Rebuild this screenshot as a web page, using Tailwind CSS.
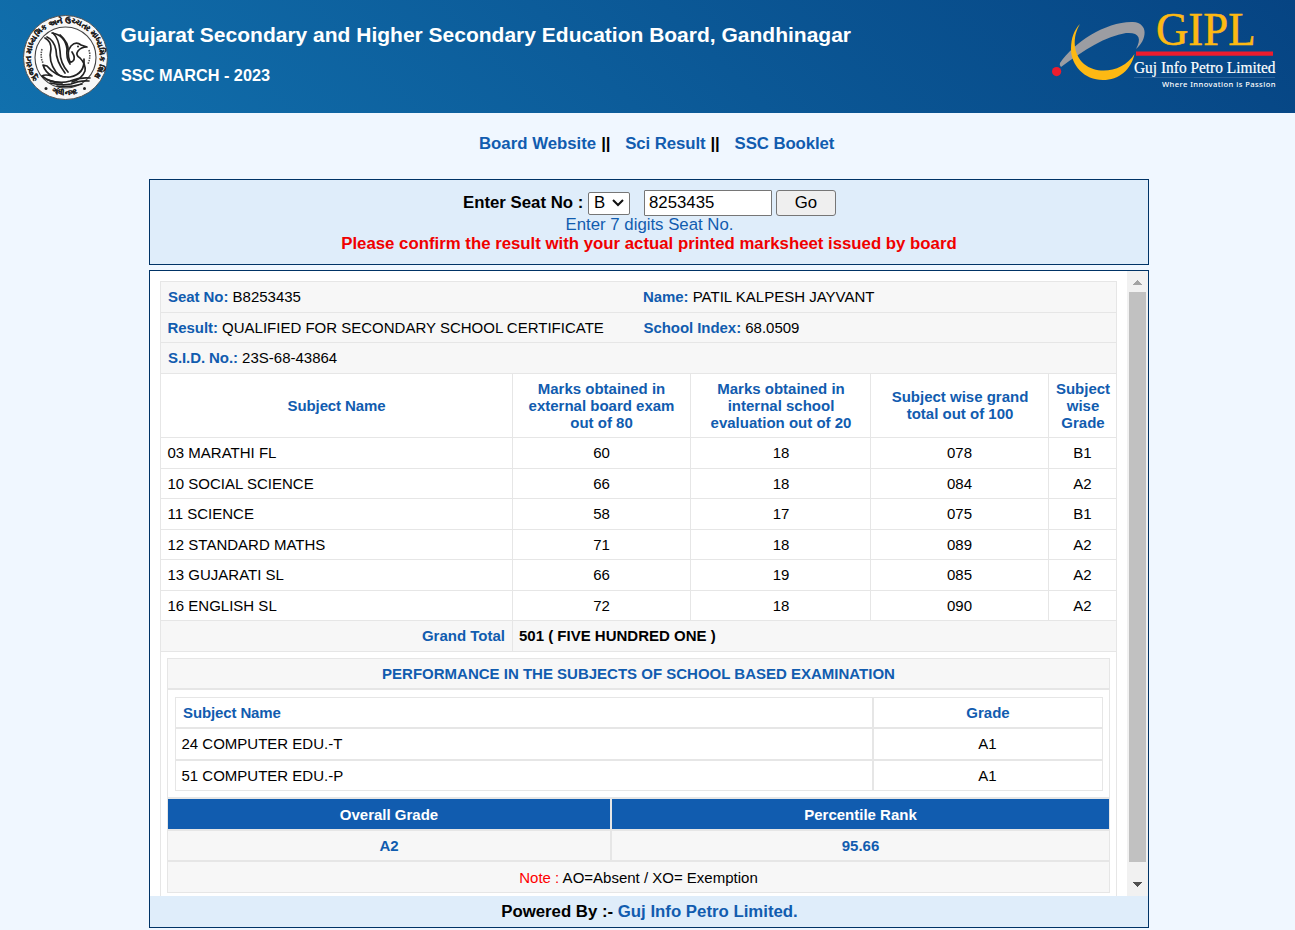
<!DOCTYPE html>
<html lang="en">
<head>
<meta charset="utf-8">
<title>SSC March 2023 Result</title>
<script src="https://cdn.jsdelivr.net/npm/@tailwindcss/browser@4"></script>
</head>
<body class="h-[930px] overflow-hidden bg-[#f0f7ff] font-['Liberation_Sans',Arial,sans-serif] text-[16.8px] leading-[19px] text-black">

<header class="flex h-[113px] justify-between bg-linear-[45deg,#1170ad_0%,#064483_100%] text-white">
  <div class="flex">
    <svg class="mt-[15px] ml-[23px] h-[85px] w-[85px] overflow-visible" viewBox="0 0 85 85" fill="none">
      <defs>
        <path id="ringTop" d="M15.500 64A34.500 34.500 0 1 1 69.500 64"/>
        <path id="ringBottom" d="M20 72.500A37.700 37.700 0 0 0 65 72.500"/>
      </defs>
      <circle cx="42.5" cy="42.5" r="42" fill="#f8f8f8" stroke="#555" stroke-width="1"/>
      <circle cx="42.5" cy="42.5" r="30.5" fill="#fff" stroke="#444" stroke-width="1.1"/>
      <g fill="#222" stroke="#222" stroke-width=".35" font-family="Noto Sans, sans-serif" font-size="7.6" font-weight="bold">
        <text><textPath href="#ringTop">ગુજરાત માધ્યમિક અને ઉચ્ચતર માધ્યમિક શિક્ષણ</textPath></text>
        <text font-size="7"><textPath href="#ringBottom" startOffset="10">ગાંધીનગર</textPath></text>
      </g>
      <g fill="#222"><circle cx="23" cy="73.5" r="1.5"/><circle cx="61.5" cy="73.5" r="1.5"/></g>
      <g stroke="#555" stroke-width="1.6" stroke-dasharray="1.5 1"><path d="M19 34Q17 42 20 48M66 35Q68 42 65 49"/></g>
      <g stroke="#222" stroke-width="1.7" stroke-linecap="round" stroke-linejoin="round">
        <path d="M22 23Q28 26 28 34Q25 46 33 57Q37 62 42 62"/>
        <path d="M24 22Q31 25 33 35Q33 46 42 58"/>
        <path d="M30 18Q36 24 37 36Q37 48 45 57"/>
        <path d="M29 18Q42 20 44 34Q43 43 47 49"/>
        <path d="M37 20Q46 28 45 36"/>
        <path d="M47 47Q43 37 48 31Q53 26 58 30L64 32Q58 32 55 36Q52 40 57 43Q63 49 62 56Q59 64 49 67"/>
        <path d="M49 37Q53 43 50 46Q48 48 46 46"/>
        <path d="M61 44Q62 59 47 62Q34 63 24 51L20 50Q22 57 29 61Q22 59 19 61Q27 68 39 68"/>
        <path d="M25 65Q38 69 47 66Q57 62 67 63"/>
        <path d="M27 68Q39 71 48 69Q58 65 66 66"/>
        <path d="M34 71Q45 73 59 69"/>
      </g>
      <circle cx="55" cy="31.5" r="1" fill="#222"/>
    </svg>
    <div class="ml-[12.500px] pt-[23px] font-bold">
      <h1 class="text-[21px] leading-[24px]">Gujarat Secondary and Higher Secondary Education Board, Gandhinagar</h1>
      <h2 class="mt-[19px] ml-[0.5px] text-[16.25px] leading-[19px]">SSC MARCH - 2023</h2>
    </div>
  </div>
  <svg class="mr-[15px] h-[100px] w-[240px] shrink-0 overflow-visible" viewBox="1040 0 240 100">
    <path d="M1060 63C1074 42 1107 21 1133 22C1149 23 1147 40 1136 49C1142 38 1139 32 1126 33C1106 36 1084 50 1061 67Q1059 65 1060 63Z" fill="#9c9da2"/>
    <path d="M1080 24C1072 37 1073 54 1084 64C1099 76 1124 71 1134.500 54C1131 70 1119 80 1103 80C1084 80 1071 65 1071 49C1071 38 1074 30 1080 24Z" fill="#fdb913"/>
    <circle cx="1056.600" cy="71.600" r="4.600" fill="#ed1c2e"/>
    <path d="M1136 51.500h137v4.200h-137z" fill="#ed1c2e"/>
    <path d="M1134 77.500h141" stroke="#3b70a5" stroke-width=".7"/>
    <text x="1156" y="45" fill="#fdb913" stroke="#fdb913" stroke-width=".5" font-family="Liberation Serif, serif" font-size="46" textLength="99.500" lengthAdjust="spacingAndGlyphs">GIPL</text>
    <text x="1134" y="73" fill="#fff" stroke="#fff" stroke-width=".2" font-family="Liberation Serif, serif" font-size="17" textLength="141.5" lengthAdjust="spacingAndGlyphs">Guj Info Petro Limited</text>
    <text x="1162" y="87" fill="#fff" font-family="Noto Sans, sans-serif" font-size="7.600" font-weight="500" textLength="113.5">Where Innovation is Passion</text>
  </svg>
</header>

<nav class="flex pt-[21px] pl-[479px] font-bold whitespace-pre"><a class="text-[#115caf]">Board Website</a><span class="mr-[15px] ml-[5px] tracking-[-0.2px]">||</span><a class="tracking-[-0.08px] text-[#115caf]">Sci Result</a><span class="mr-[15px] ml-[5px] tracking-[-0.2px]">||</span><a class="tracking-[-0.08px] text-[#115caf]">SSC Booklet</a></nav>

<main class="ml-[149px] w-[1000px]">
  <form class="mt-[26px] h-[86px] border border-[#003366] bg-[#dfedfa] pt-[10px] text-center">
    <div class="flex h-[26px] items-center pl-[313px]">
      <label class="w-[120px] pb-[1px] text-left font-bold whitespace-nowrap">Enter Seat No :</label>
      <div class="ml-[5px] flex h-[23px] w-[42px] items-center justify-between rounded-[2px] border border-[#767676] bg-white px-[5px]">
        <span class="pb-[2px]">B</span>
        <svg class="h-[8px] w-[12px]" viewBox="0 0 12 8" fill="none" stroke="#111" stroke-width="2"><path d="M1 1l5 5 5-5"/></svg>
      </div>
      <div class="ml-[14px] flex h-[26px] w-[128px] items-center rounded-[1px] border border-[#767676] bg-white pb-[1px] pl-[4px]">8253435</div>
      <button type="button" class="ml-[4px] h-[26px] w-[60px] rounded-[3px] border border-[#767676] bg-[#efefef] pb-[1px]">Go</button>
    </div>
    <p class="-mt-[1px] pl-[1px] text-[#115caf]">Enter 7 digits Seat No.</p>
    <p class="font-bold text-[#f00000]">Please confirm the result with your actual printed marksheet issued by board</p>
  </form>

  <section class="mt-[5px] h-[658px] border border-[#003366] bg-[#dfedfa]">
    <div class="flex h-[625px] overflow-hidden bg-white">
      <div class="mt-[10px] ml-[10px] h-[640px] w-[957px] shrink-0 border border-[#e6e6e6] text-[15px] leading-[17px]">
        <div class="flex h-[31px] items-center border-b border-[#e6e6e6] bg-[#f7f7f7] pb-[1px] pl-[7px]"><p class="w-[475px]"><b class="tracking-[-0.06px] text-[#115caf]">Seat No:</b> B8253435</p><p><b class="tracking-[-0.06px] text-[#115caf]">Name:</b> PATIL KALPESH JAYVANT</p></div>
        <div class="flex h-[30px] items-center border-b border-[#e6e6e6] bg-[#f7f7f7] pl-[6.500px]"><p class="w-[476px]"><b class="tracking-[-0.06px] text-[#115caf]">Result:</b> QUALIFIED FOR SECONDARY SCHOOL CERTIFICATE</p><p><b class="tracking-[-0.06px] text-[#115caf]">School Index:</b> 68.0509</p></div>
        <div class="flex h-[31px] items-center border-b border-[#e6e6e6] bg-[#f7f7f7] pb-[1px] pl-[7px]"><p><b class="tracking-[-0.08px] text-[#115caf]">S.I.D. No.:</b> 23S-68-43864</p></div>

        <div class="grid h-[64px] grid-cols-[352px_178px_180px_178px_67px] divide-x divide-[#e6e6e6] border-b border-[#e6e6e6] text-center font-bold text-[#115caf] *:flex *:items-center *:justify-center">
          <div class="tracking-[-0.12px]">Subject Name</div><div>Marks obtained in<br>external board exam<br>out of 80</div><div class="pl-[1px]">Marks obtained in<br>internal school<br>evaluation out of 20</div><div class="pb-[2px] pl-[1px]">Subject wise grand<br>total out of 100</div><div class="pl-[1px]">Subject<br>wise<br>Grade</div>
        </div>
        <div class="grid h-[31px] grid-cols-[352px_178px_180px_178px_67px] divide-x divide-[#e6e6e6] border-b border-[#e6e6e6] text-center leading-[30px]"><div class="pl-[6.500px] text-left">03 MARATHI FL</div><div>60</div><div class="pl-[1px]">18</div><div>078</div><div>B1</div></div>
        <div class="grid h-[30px] grid-cols-[352px_178px_180px_178px_67px] divide-x divide-[#e6e6e6] border-b border-[#e6e6e6] text-center leading-[29px]"><div class="pl-[6.500px] text-left">10 SOCIAL SCIENCE</div><div>66</div><div class="pl-[1px]">18</div><div>084</div><div>A2</div></div>
        <div class="grid h-[31px] grid-cols-[352px_178px_180px_178px_67px] divide-x divide-[#e6e6e6] border-b border-[#e6e6e6] text-center leading-[30px]"><div class="pl-[6.500px] text-left">11 SCIENCE</div><div>58</div><div class="pl-[1px]">17</div><div>075</div><div>B1</div></div>
        <div class="grid h-[30px] grid-cols-[352px_178px_180px_178px_67px] divide-x divide-[#e6e6e6] border-b border-[#e6e6e6] text-center leading-[29px]"><div class="pl-[6.500px] text-left">12 STANDARD MATHS</div><div>71</div><div class="pl-[1px]">18</div><div>089</div><div>A2</div></div>
        <div class="grid h-[31px] grid-cols-[352px_178px_180px_178px_67px] divide-x divide-[#e6e6e6] border-b border-[#e6e6e6] text-center leading-[30px]"><div class="pl-[6.500px] text-left">13 GUJARATI SL</div><div>66</div><div class="pl-[1px]">19</div><div>085</div><div>A2</div></div>
        <div class="grid h-[30px] grid-cols-[352px_178px_180px_178px_67px] divide-x divide-[#e6e6e6] border-b border-[#e6e6e6] text-center leading-[29px]"><div class="pl-[6.500px] text-left">16 ENGLISH SL</div><div>72</div><div class="pl-[1px]">18</div><div>090</div><div>A2</div></div>
        <div class="flex h-[31px] border-b border-[#e6e6e6] bg-[#f7f7f7] leading-[30px] font-bold"><div class="w-[352px] border-r border-[#e6e6e6] pr-[7px] text-right text-[#115caf]">Grand Total</div><div class="pl-[6px]">501 ( FIVE HUNDRED ONE )</div></div>

        <div class="mt-[6px] ml-[6px] w-[943px] border border-[#e6e6e6]">
          <div class="h-[31px] border-b-2 border-[#e6e6e6] bg-[#f7f7f7] text-center leading-[30px] font-bold text-[#115caf]">PERFORMANCE IN THE SUBJECTS OF SCHOOL BASED EXAMINATION</div>
          <div class="h-[109px] border-b-2 border-[#e6e6e6] pt-[7px] pl-[7px]">
            <div class="w-[928px] border border-[#e6e6e6]">
              <div class="grid h-[31px] grid-cols-[698px_228px] border-b-2 border-[#e6e6e6] leading-[30px] font-bold text-[#115caf]"><div class="border-r-2 border-[#e6e6e6] pl-[7px] tracking-[-0.12px]">Subject Name</div><div class="text-center">Grade</div></div>
              <div class="grid h-[32px] grid-cols-[698px_228px] border-b-2 border-[#e6e6e6] leading-[30px]"><div class="border-r-2 border-[#e6e6e6] pl-[5.500px]">24 COMPUTER EDU.-T</div><div class="pr-[1px] text-center">A1</div></div>
              <div class="grid h-[29px] grid-cols-[698px_228px] leading-[30px]"><div class="border-r-2 border-[#e6e6e6] pl-[5.500px]">51 COMPUTER EDU.-P</div><div class="pr-[1px] text-center">A1</div></div>
            </div>
          </div>
          <div class="grid h-[32px] grid-cols-[444px_497px] border-b-2 border-[#e6e6e6] bg-[#115caf] text-center leading-[31px] font-bold text-white"><div class="border-r-2 border-[#e6e6e6]">Overall Grade</div><div>Percentile Rank</div></div>
          <div class="grid h-[31px] grid-cols-[444px_497px] border-b-2 border-[#e6e6e6] bg-[#f7f7f7] text-center leading-[30px] font-bold text-[#115caf]"><div class="border-r-2 border-[#e6e6e6]">A2</div><div>95.66</div></div>
          <div class="h-[30px] bg-[#f7f7f7] text-center leading-[31px]"><span class="text-[#f00]">Note :</span> AO=Absent / XO= Exemption</div>
        </div>
      </div>
      <div class="ml-[10px] flex w-[21px] flex-col items-center bg-[#f1f1f1]">
        <svg class="mt-[9px] h-[5px] w-[9px] shrink-0" viewBox="0 0 9 5" fill="#a3a3a3" shape-rendering="crispEdges"><path d="M0 5L4.500 0 9 5z"/></svg>
        <div class="mt-[7px] h-[570px] w-[17px] shrink-0 bg-[#c1c1c1]"></div>
        <svg class="mt-[20px] h-[5px] w-[9px] shrink-0" viewBox="0 0 9 5" fill="#505050" shape-rendering="crispEdges"><path d="M0 0h9L4.500 5z"/></svg>
      </div>
    </div>
    <p class="pl-[1px] text-center leading-[31px] font-bold">Powered By :- <a class="text-[#115caf]">Guj Info Petro Limited.</a></p>
  </section>
</main>
</body>
</html>
